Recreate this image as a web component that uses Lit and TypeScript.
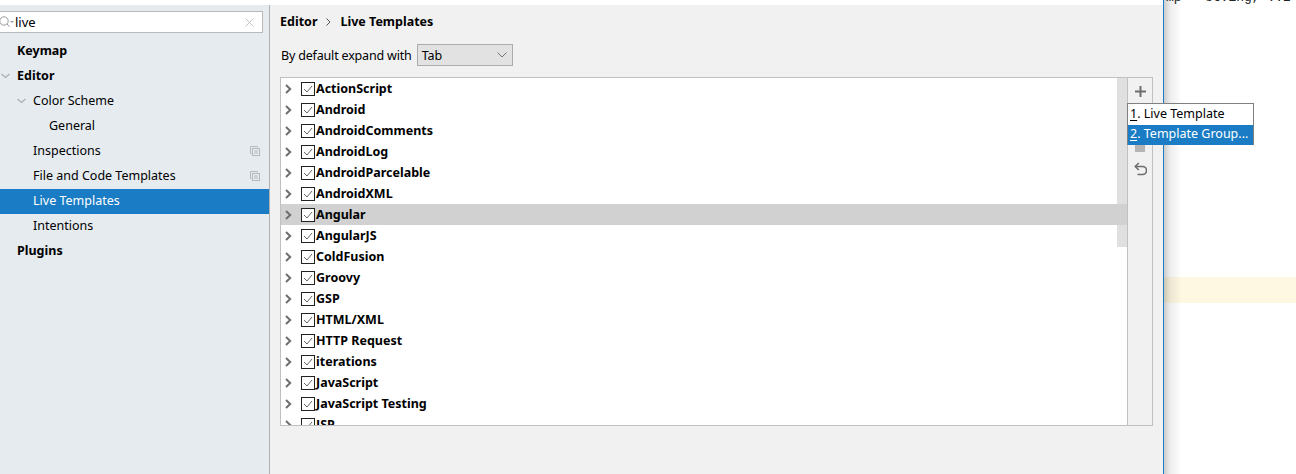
import { LitElement, html, css, svg } from 'lit'
import { customElement } from 'lit/decorators.js'

const templates = [
  'ActionScript', 'Android', 'AndroidComments', 'AndroidLog', 'AndroidParcelable',
  'AndroidXML', 'Angular', 'AngularJS', 'ColdFusion', 'Groovy', 'GSP', 'HTML/XML',
  'HTTP Request', 'iterations', 'JavaScript', 'JavaScript Testing', 'JSP'
]

const copyIcon = svg`<svg class="copy" width="12" height="12" viewBox="0 0 12 12" fill="none" stroke="#b4b9bd"><path d="M2.5 8.5h-1v-7h7v1"/><rect x="3.5" y="3.5" width="7" height="7" fill="#e6ebf0"/><path d="M5 6h4M5 8h4"/></svg>`

const downIcon = (left: number) => svg`<svg class="arrow" style="left:${left}px" width="9" height="6" viewBox="0 0 9 6" fill="none" stroke="#a9aeb3" stroke-width="1.2"><path d="M.5 1l4 3.5 4-3.5"/></svg>`

@customElement('app-root')
export class AppRoot extends LitElement {
  static styles = css`
    * { box-sizing: border-box }

    :host {
      display: block;
      position: relative;
      width: 1296px;
      height: 474px;
      overflow: hidden;
      font-family: 'Noto Sans', sans-serif;
      font-size: 12.5px;
      color: #000;
    }

    .page {
      display: flex;
      height: 474px;
      background: #fff;
    }

    .dialog {
      display: flex;
      flex-direction: column;
      width: 1164px;
      height: 474px;
      flex: none;
      border-right: 1px solid #1a7cc4;
    }

    .top-strip {
      height: 5px;
      flex: none;
      background: #fff;
    }

    .dialog-body {
      display: flex;
      flex: 1;
      min-height: 0;
    }

    .sidebar {
      width: 270px;
      flex: none;
      padding-top: 6px;
      background: #e6ebf0;
      border-right: 1px solid #b0b0b0;
    }

    .search {
      display: flex;
      align-items: center;
      width: 263px;
      height: 22px;
      margin-bottom: 6px;
      padding-right: 8px;
      background: #fff;
      border: 1px solid #b9b9b9;
      border-left: 0;
    }

    .search-text {
      flex: 1;
      font-size: 13px;
      line-height: 20px;
    }

    .row {
      display: flex;
      align-items: center;
      position: relative;
      height: 25px;
      padding-bottom: 2px;
      white-space: nowrap;
    }

    .row .arrow {
      position: absolute;
      top: 9px;
    }

    .row .copy {
      position: absolute;
      left: 249px;
      top: 6px;
    }

    .level-0 { padding-left: 17px; font-weight: 700 }
    .level-1 { padding-left: 33px }
    .level-2 { padding-left: 49px }

    .selected {
      background: #1a7cc4;
      color: #fff;
    }

    .content {
      flex: 1;
      min-width: 0;
      padding: 8px 10px 0;
      background: #f1f1f1;
    }

    .crumbs {
      display: flex;
      align-items: center;
      gap: 9px;
      height: 17px;
      font-weight: 700;
    }

    .expand {
      display: flex;
      align-items: center;
      gap: 5px;
      height: 22px;
      margin: 14px 0 11px;
      padding-left: 1px;
    }

    .expand-label {
      letter-spacing: -0.18px;
    }

    .select {
      display: flex;
      align-items: center;
      justify-content: space-between;
      width: 96px;
      height: 22px;
      padding: 0 5px 0 4px;
      background: #e2e2e2;
      border: 1px solid #acacac;
    }

    .panel {
      display: flex;
      width: 873px;
      height: 349px;
      border: 1px solid #c0c0c0;
    }

    .list {
      position: relative;
      flex: 1;
      min-width: 0;
      overflow: hidden;
      background: #fff;
    }

    .item {
      position: relative;
      z-index: 1;
      display: flex;
      align-items: center;
      height: 21px;
      padding-left: 4px;
      padding-bottom: 1px;
      font-weight: 700;
      white-space: nowrap;
    }

    .item.current {
      background: #d1d1d1;
    }

    .item svg { margin-top: 1px }
    .item svg.chev { margin-right: 9px }
    .item svg.box { margin-right: 1px }

    .thumb {
      position: absolute;
      top: 0;
      right: 0;
      width: 10px;
      height: 169px;
      background: #e0e0e0;
    }

    .toolbar {
      display: flex;
      flex-direction: column;
      align-items: center;
      gap: 9px;
      width: 25px;
      flex: none;
      padding-top: 5px;
      border-left: 1px solid #c0c0c0;
    }

    .tool {
      display: flex;
      align-items: center;
      justify-content: center;
      width: 16px;
      height: 16px;
    }

    .tool.stack {
      align-items: flex-end;
      height: 44px;
    }

    .popup {
      position: absolute;
      left: 1127px;
      top: 103px;
      width: 127px;
      height: 42px;
      padding: 1px 0;
      background: #fff;
      border: 1px solid #808080;
    }

    .menu-item {
      height: 20px;
      padding-left: 2px;
      line-height: 18px;
      white-space: nowrap;
    }

    .menu-item u { text-underline-offset: 2px }

    .menu-item.active {
      background: #1a7cc4;
      color: #fff;
    }

    .editor {
      position: relative;
      flex: 1;
      min-width: 0;
      overflow: hidden;
      background: #fff;
    }

    .code {
      position: absolute;
      left: 2px;
      top: -10px;
      font-family: 'Liberation Mono', monospace;
      font-size: 13px;
      line-height: 15px;
      white-space: pre;
      color: #222;
    }

    .highlight {
      position: absolute;
      left: 0;
      right: 0;
      top: 277px;
      height: 26px;
      background: #fef8e2;
    }

    .shadow {
      position: absolute;
      left: 0;
      top: 0;
      bottom: 0;
      width: 18px;
      background: linear-gradient(to right, rgba(0, 0, 0, .2), rgba(0, 0, 0, .07) 35%, rgba(0, 0, 0, 0));
    }
  `

  renderItem (name: string) {
    return html`
      <div class="item ${name === 'Angular' ? 'current' : ''}">
        <svg class="chev" width="7" height="10" viewBox="0 0 7 10" fill="none" stroke="#6e6e6e" stroke-width="2"><path d="M1 1l4.200 4L1 9"/></svg>
        <svg class="box" width="14" height="14" viewBox="0 0 14 14" fill="#fff"><rect x=".5" y=".5" width="13" height="13" stroke="#222"/><path d="M3 7l3 3 5-6" fill="none" stroke="#666"/></svg>
        <span>${name}</span>
      </div>
    `
  }

  render () {
    return html`
      <div class="page">
        <div class="dialog">
          <div class="top-strip"></div>
          <div class="dialog-body">
            <div class="sidebar">
              <div class="search">
                <svg width="15" height="12" viewBox="0 0 15 12" fill="none" stroke="#9a9a9a"><circle cx="4" cy="5" r="4.200"/><path d="M7 8l2.600 2.800"/><path d="M10 5h4l-2 2z" fill="#9a9a9a" stroke="none"/></svg>
                <span class="search-text">live</span>
                <svg width="9" height="9" viewBox="0 0 9 9" fill="none" stroke="#c2c2c2"><path d="M.5.5l8 8M8.500.5l-8 8"/></svg>
              </div>
              <div class="row level-0">Keymap</div>
              <div class="row level-0">${downIcon(1)}Editor</div>
              <div class="row level-1">${downIcon(17)}Color Scheme</div>
              <div class="row level-2">General</div>
              <div class="row level-1">Inspections${copyIcon}</div>
              <div class="row level-1">File and Code Templates${copyIcon}</div>
              <div class="row level-1 selected">Live Templates</div>
              <div class="row level-1">Intentions</div>
              <div class="row level-0">Plugins</div>
            </div>
            <div class="content">
              <div class="crumbs">
                <span>Editor</span>
                <svg width="5" height="8" viewBox="0 0 5 8" fill="none" stroke="#555"><path d="M.5.5L4 4 .5 7.500"/></svg>
                <span>Live Templates</span>
              </div>
              <div class="expand">
                <span class="expand-label">By default expand with</span>
                <div class="select">
                  <span>Tab</span>
                  <svg width="10" height="6" viewBox="0 0 10 6" fill="none" stroke="#777"><path d="M.5.5L5 5 9.500.5"/></svg>
                </div>
              </div>
              <div class="panel">
                <div class="list">
                  ${templates.map(t => this.renderItem(t))}
                  <div class="thumb"></div>
                </div>
                <div class="toolbar">
                  <div class="tool"><svg width="11" height="11" viewBox="0 0 11 11" fill="#6e6e6e"><path d="M4.500 0h2v4.500H11v2H6.500V11h-2V6.500H0v-2h4.500z"/></svg></div>
                  <div class="tool stack"><svg width="10" height="12" viewBox="0 0 10 12" fill="#b5b5b5"><rect width="10" height="12"/></svg></div>
                  <div class="tool"><svg width="13" height="14" viewBox="0 0 13 14" fill="none" stroke="#6e6e6e" stroke-width="1.600"><path d="M1.500 4.500h7a3.700 3.700 0 0 1 0 8H3.500"/><path d="M4.800 1L1.300 4.500 4.800 8"/></svg></div>
                </div>
              </div>
            </div>
          </div>
        </div>
        <div class="editor">
          <div class="code">mp = st.ing, ..2</div>
          <div class="highlight"></div>
          <div class="shadow"></div>
        </div>
      </div>
      <div class="popup">
        <div class="menu-item"><u>1</u>. Live Template</div>
        <div class="menu-item active"><u>2</u>. Template Group...</div>
      </div>
    `
  }
}
